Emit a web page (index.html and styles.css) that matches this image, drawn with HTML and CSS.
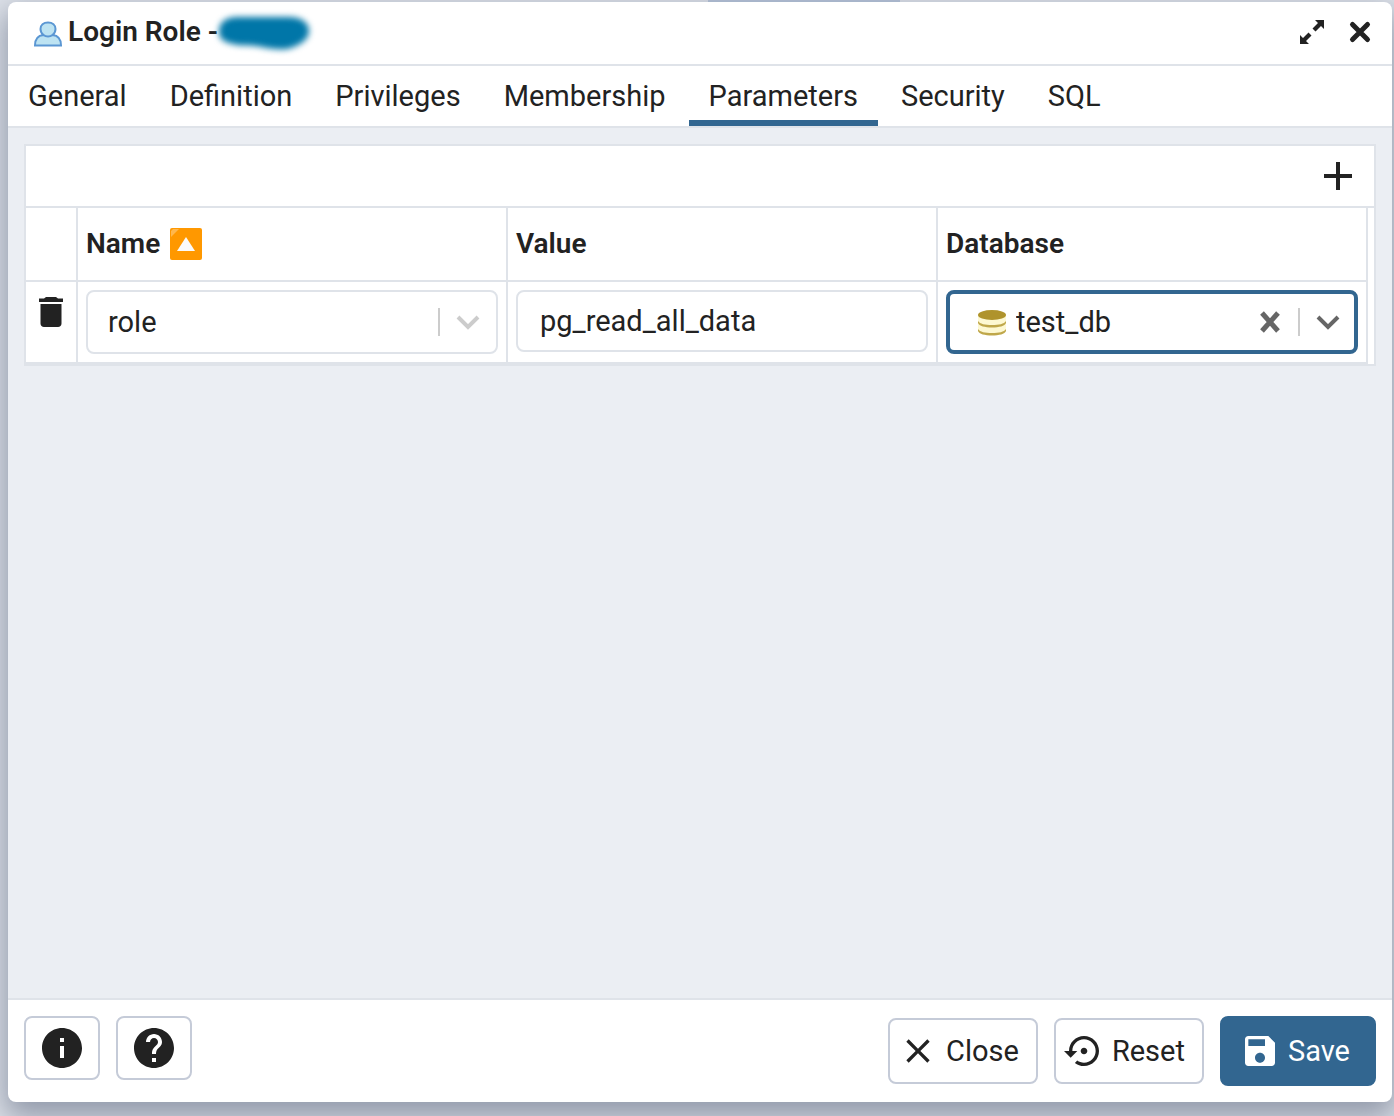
FILE: index.html
```html
<!DOCTYPE html>
<html lang="en">
<head>
  <meta charset="UTF-8" />
  <meta name="viewport" content="width=device-width, initial-scale=1.0">
  <title>Login Role</title>
  <link rel="stylesheet" href="styles.css">
</head>
<body>
  <div class="backdrop"></div>
  <main class="dialog">
    <header class="titlebar">
      <svg class="icon-user" viewBox="0 0 30 26" aria-hidden="true">
        <path d="M2 24.500c0-5 2-8.500 6-9.500l2.500-1C8.500 12.500 7.500 10.500 7.500 8c0-4 3-6.500 7.500-6.500S22.500 4 22.500 8c0 2.500-1 4.500-3 6l2.500 1c4 1 6 4.500 6 9.500z" fill="#bde3f2"/>
        <path d="M10.500 14C8.500 12.500 7.500 10.500 7.500 8c0-4 3-6.500 7.500-6.500S22.500 4 22.500 8c0 2.500-1 4.500-3 6M10.500 14C5 14.500 2 18 2 24.500h26c0-6.500-3-10-8.500-10.500M10.500 14c2.500 2 6.500 2 9 0" fill="none" stroke="#5b97d3" stroke-width="2"/>
      </svg>
      <h1>Login Role -</h1>
      <svg class="redacted" viewBox="0 0 104 44" aria-hidden="true">
        <path d="M7 22C7 13 12 8 24 7h52c14 0 21 6 21 14 0 9-10 15-22 18-8 1-22-1-30-3-10-1-18 0-24-2C12 32 7 29 7 22z" fill="#0076a8"/>
      </svg>
      <div class="window-actions">
        <button type="button" aria-label="Maximize">
          <svg width="28" height="28" viewBox="0 0 28 28"><path d="M17 2h9v9l-3-3-5.500 5.500-3-3L20 5zM11 26H2v-9l3 3 5.500-5.500 3 3L8 23z" fill="#222"/></svg>
        </button>
        <button type="button" aria-label="Close dialog">
          <svg width="28" height="28" viewBox="0 0 28 28"><path d="M6.500 6.500l15 15M21.500 6.500l-15 15" stroke="#222" stroke-width="5" stroke-linecap="round"/></svg>
        </button>
      </div>
    </header>

    <nav class="tabs" role="tablist">
      <button type="button" role="tab">General</button>
      <button type="button" role="tab">Definition</button>
      <button type="button" role="tab">Privileges</button>
      <button type="button" role="tab">Membership</button>
      <button type="button" role="tab" class="active" aria-selected="true">Parameters</button>
      <button type="button" role="tab">Security</button>
      <button type="button" role="tab">SQL</button>
    </nav>

    <section class="content">
      <div class="grid">
        <div class="grid-toolbar">
          <button type="button" aria-label="Add row">
            <svg width="32" height="32" viewBox="0 0 32 32"><path d="M16 2v28M2 16h28" stroke="#222" stroke-width="4"/></svg>
          </button>
        </div>
        <div class="grid-body">
          <table>
            <thead>
              <tr>
                <th class="col-delete"></th>
                <th>
                  <div class="sorted">
                    <label for="paramName">Name</label>
                    <svg class="icon-sort" viewBox="0 0 32 32" aria-hidden="true">
                      <rect width="32" height="32" rx="2" fill="#ff9800"/>
                      <path d="M1 9V3l2-2h6z" fill="#ffb74d"/>
                      <path d="M16 9l9 14H7z" fill="#fafafa"/>
                    </svg>
                  </div>
                </th>
                <th><label for="paramValue">Value</label></th>
                <th><label for="paramDatabase">Database</label></th>
              </tr>
            </thead>
            <tbody>
              <tr>
                <td class="col-delete">
                  <button type="button" aria-label="Delete row">
                    <svg width="24" height="32" viewBox="0 0 24 32"><path d="M7 1h10l2 1.500h5V6H0V2.500h5zM1.500 8h21v19.500c0 2-1.500 3.500-3.500 3.500H5c-2 0-3.500-1.500-3.500-3.500z" fill="#222"/></svg>
                  </button>
                </td>
                <td>
                  <div class="control">
                    <select id="paramName"><option>role</option></select>
                    <span class="separator"></span>
                    <svg class="chevron" viewBox="0 0 28 28" aria-hidden="true"><path d="M4 9l10 10L24 9" fill="none" stroke="#ccc" stroke-width="4"/></svg>
                  </div>
                </td>
                <td>
                  <div class="control control-text">
                    <input type="text" id="paramValue" value="pg_read_all_data">
                  </div>
                </td>
                <td>
                  <div class="control focused">
                    <svg class="icon-db" viewBox="0 0 28 28" aria-hidden="true">
                      <path d="M0 6v16c0 3 6 5 14 5s14-2 14-5V6z" fill="#fdf8d2"/>
                      <path d="M0 13c2 3 7 4 14 4s12-1 14-4v2c-1 3-7 4.500-14 4.500S1 18 0 15zM0 21c2 3 7 4 14 4s12-1 14-4v2c-1 3-7 4.500-14 4.500S1 26 0 23z" fill="#bfa74a"/>
                      <ellipse cx="14" cy="7" rx="14" ry="5" fill="#af932c"/>
                    </svg>
                    <select id="paramDatabase"><option>test_db</option></select>
                    <button type="button" aria-label="Clear database">
                      <svg width="24" height="24" viewBox="0 0 24 24"><path d="M4 3l16 18M20 3L4 21" stroke="#666" stroke-width="5"/></svg>
                    </button>
                    <span class="separator"></span>
                    <svg class="chevron" viewBox="0 0 28 28" aria-hidden="true"><path d="M4 9l10 10L24 9" fill="none" stroke="#666" stroke-width="4"/></svg>
                  </div>
                </td>
              </tr>
            </tbody>
          </table>
        </div>
      </div>
    </section>

    <footer class="footer">
      <button type="button" class="btn btn-icon" aria-label="Information">
        <svg width="48" height="48" viewBox="0 0 24 24"><path d="M12 2C6.480 2 2 6.480 2 12s4.480 10 10 10 10-4.480 10-10S17.520 2 12 2zm1 15h-2v-6h2v6zm0-8h-2V7h2v2z" fill="#222"/></svg>
      </button>
      <button type="button" class="btn btn-icon" aria-label="Help">
        <svg width="48" height="48" viewBox="0 0 24 24"><path d="M12 2C6.480 2 2 6.480 2 12s4.480 10 10 10 10-4.480 10-10S17.520 2 12 2zm1 17h-2v-2h2v2zm2.070-7.750l-.9.920C13.450 12.900 13 13.500 13 15h-2v-.5c0-1.100.45-2.100 1.170-2.830l1.240-1.260c.37-.36.59-.86.59-1.410 0-1.100-.9-2-2-2s-2 .9-2 2H8c0-2.210 1.790-4 4-4s4 1.790 4 4c0 .88-.36 1.680-.93 2.250z" fill="#222"/></svg>
      </button>
      <div class="footer-actions">
        <button type="button" class="btn">
          <svg width="40" height="40" viewBox="0 0 24 24"><path d="M19 6.410L17.590 5 12 10.590 6.410 5 5 6.410 10.590 12 5 17.590 6.410 19 12 13.410 17.590 19 19 17.590 13.410 12z" fill="#222"/></svg>
          Close
        </button>
        <button type="button" class="btn">
          <svg width="40" height="40" viewBox="0 0 24 24"><path d="M14 12c0-1.100-.9-2-2-2s-2 .9-2 2 .9 2 2 2 2-.9 2-2zm-2-9c-4.970 0-9 4.030-9 9H0l4 4 4-4H5c0-3.870 3.130-7 7-7s7 3.130 7 7-3.130 7-7 7c-1.510 0-2.910-.49-4.060-1.300l-1.420 1.440C8.040 20.300 9.940 21 12 21c4.970 0 9-4.030 9-9s-4.030-9-9-9z" fill="#222"/></svg>
          Reset
        </button>
        <button type="button" class="btn btn-primary">
          <svg width="40" height="40" viewBox="0 0 24 24"><path d="M17 3H5c-1.110 0-2 .9-2 2v14c0 1.100.89 2 2 2h14c1.100 0 2-.9 2-2V7l-4-4zm-5 16c-1.660 0-3-1.340-3-3s1.340-3 3-3 3 1.340 3 3-1.340 3-3 3zm3-10H5V5h10v4z" fill="#fff"/></svg>
          Save
        </button>
      </div>
    </footer>
  </main>
</body>
</html>
```

FILE: styles.css
```css
* {
  box-sizing: border-box;
}
body {
  margin: 0;
  padding: 0 2px 14px 8px;
  min-height: 100vh;
  display: flex;
  flex-direction: column;
  font-family: Roboto, sans-serif;
  font-size: 29px;
  line-height: 32px;
  color: #222;
  background: #dfe3ea;
}
button, input, select {
  font: inherit;
  color: inherit;
  margin: 0;
  padding: 0;
  border: none;
  outline: none;
  background: none;
}
button {
  cursor: pointer;
}
svg {
  display: block;
  flex: none;
}
.backdrop {
  height: 2px;
  width: 192px;
  margin-left: 700px;
  background: #b9c6da;
}
.dialog {
  flex: 1;
  display: flex;
  flex-direction: column;
  background: #fff;
  border-radius: 8px;
  overflow: hidden;
  box-shadow: 0 12px 30px 4px rgba(70, 82, 108, 0.5);
}

/* title bar */
.titlebar {
  display: flex;
  align-items: center;
  height: 64px;
  padding: 0 18px 2px 25px;
  border-bottom: 2px solid #dfe3e9;
}
.icon-user {
  width: 30px;
  height: 26px;
  margin-top: 4px;
}
.titlebar h1 {
  margin: 0 0 0 5px;
  font-size: 28px;
  font-weight: 600;
}
.redacted {
  width: 104px;
  height: 44px;
  margin-left: -6px;
  filter: blur(3px);
}
.window-actions {
  display: flex;
  gap: 20px;
  margin-left: auto;
}

/* tabs */
.tabs {
  display: flex;
  gap: 3px;
  height: 62px;
  border-bottom: 2px solid #dfe3e9;
}
.tabs button {
  padding: 6px 20px 0;
  border-bottom: 6px solid transparent;
}
.tabs .active {
  border-bottom-color: #326690;
}

/* parameters grid */
.content {
  flex: 1;
  padding: 16px;
  background: #ebeef3;
}
.grid {
  border: 2px solid #dfe3e9;
  background: #fff;
}
.grid-toolbar {
  display: flex;
  justify-content: flex-end;
  align-items: center;
  height: 62px;
  padding-right: 20px;
  border-bottom: 2px solid #dfe3e9;
}
.grid-body {
  padding-right: 6px;
}
table {
  width: 100%;
  table-layout: fixed;
  border-collapse: separate;
  border-spacing: 0;
}
th, td {
  padding: 8px;
  border-right: 2px solid #dfe3e9;
  border-bottom: 2px solid #dfe3e9;
  text-align: left;
  vertical-align: top;
}
th {
  height: 74px;
  font-size: 28px;
  font-weight: 600;
  vertical-align: middle;
}
.col-delete {
  width: 52px;
}
.col-delete button {
  display: block;
  margin: 6px auto 0;
}
.sorted {
  display: flex;
  align-items: center;
  gap: 10px;
}
.icon-sort {
  width: 32px;
  height: 32px;
}
.control {
  display: flex;
  align-items: center;
  height: 64px;
  padding: 0 14px 0 20px;
  border: 2px solid #dfe3e9;
  border-radius: 8px;
}
.control input,
.control select {
  flex: 1;
  min-width: 0;
  appearance: none;
}
.control-text {
  height: 62px;
  padding-left: 22px;
}
.focused {
  padding: 0 12px 0 28px;
  border: 4px solid #326690;
}
.focused select {
  margin-left: 10px;
}
.icon-db {
  width: 28px;
  height: 28px;
}
.separator {
  width: 2px;
  height: 28px;
  margin: 0 14px 0 16px;
  background: #ccc;
}
.chevron {
  width: 28px;
  height: 28px;
}

/* footer */
.footer {
  display: flex;
  align-items: flex-start;
  gap: 16px;
  padding: 16px;
  border-top: 2px solid #dfe3e9;
}
.footer-actions {
  display: flex;
  align-items: center;
  gap: 16px;
  margin-left: auto;
}
.btn {
  display: flex;
  align-items: center;
  gap: 8px;
  height: 66px;
  padding: 0 17px 0 8px;
  border: 2px solid #c5cbd8;
  border-radius: 8px;
}
.btn-icon {
  width: 76px;
  height: 64px;
  padding: 0;
  justify-content: center;
}
.btn-primary {
  height: 70px;
  padding: 0 24px 0 18px;
  border-color: #326690;
  background: #326690;
  color: #fff;
}
```
